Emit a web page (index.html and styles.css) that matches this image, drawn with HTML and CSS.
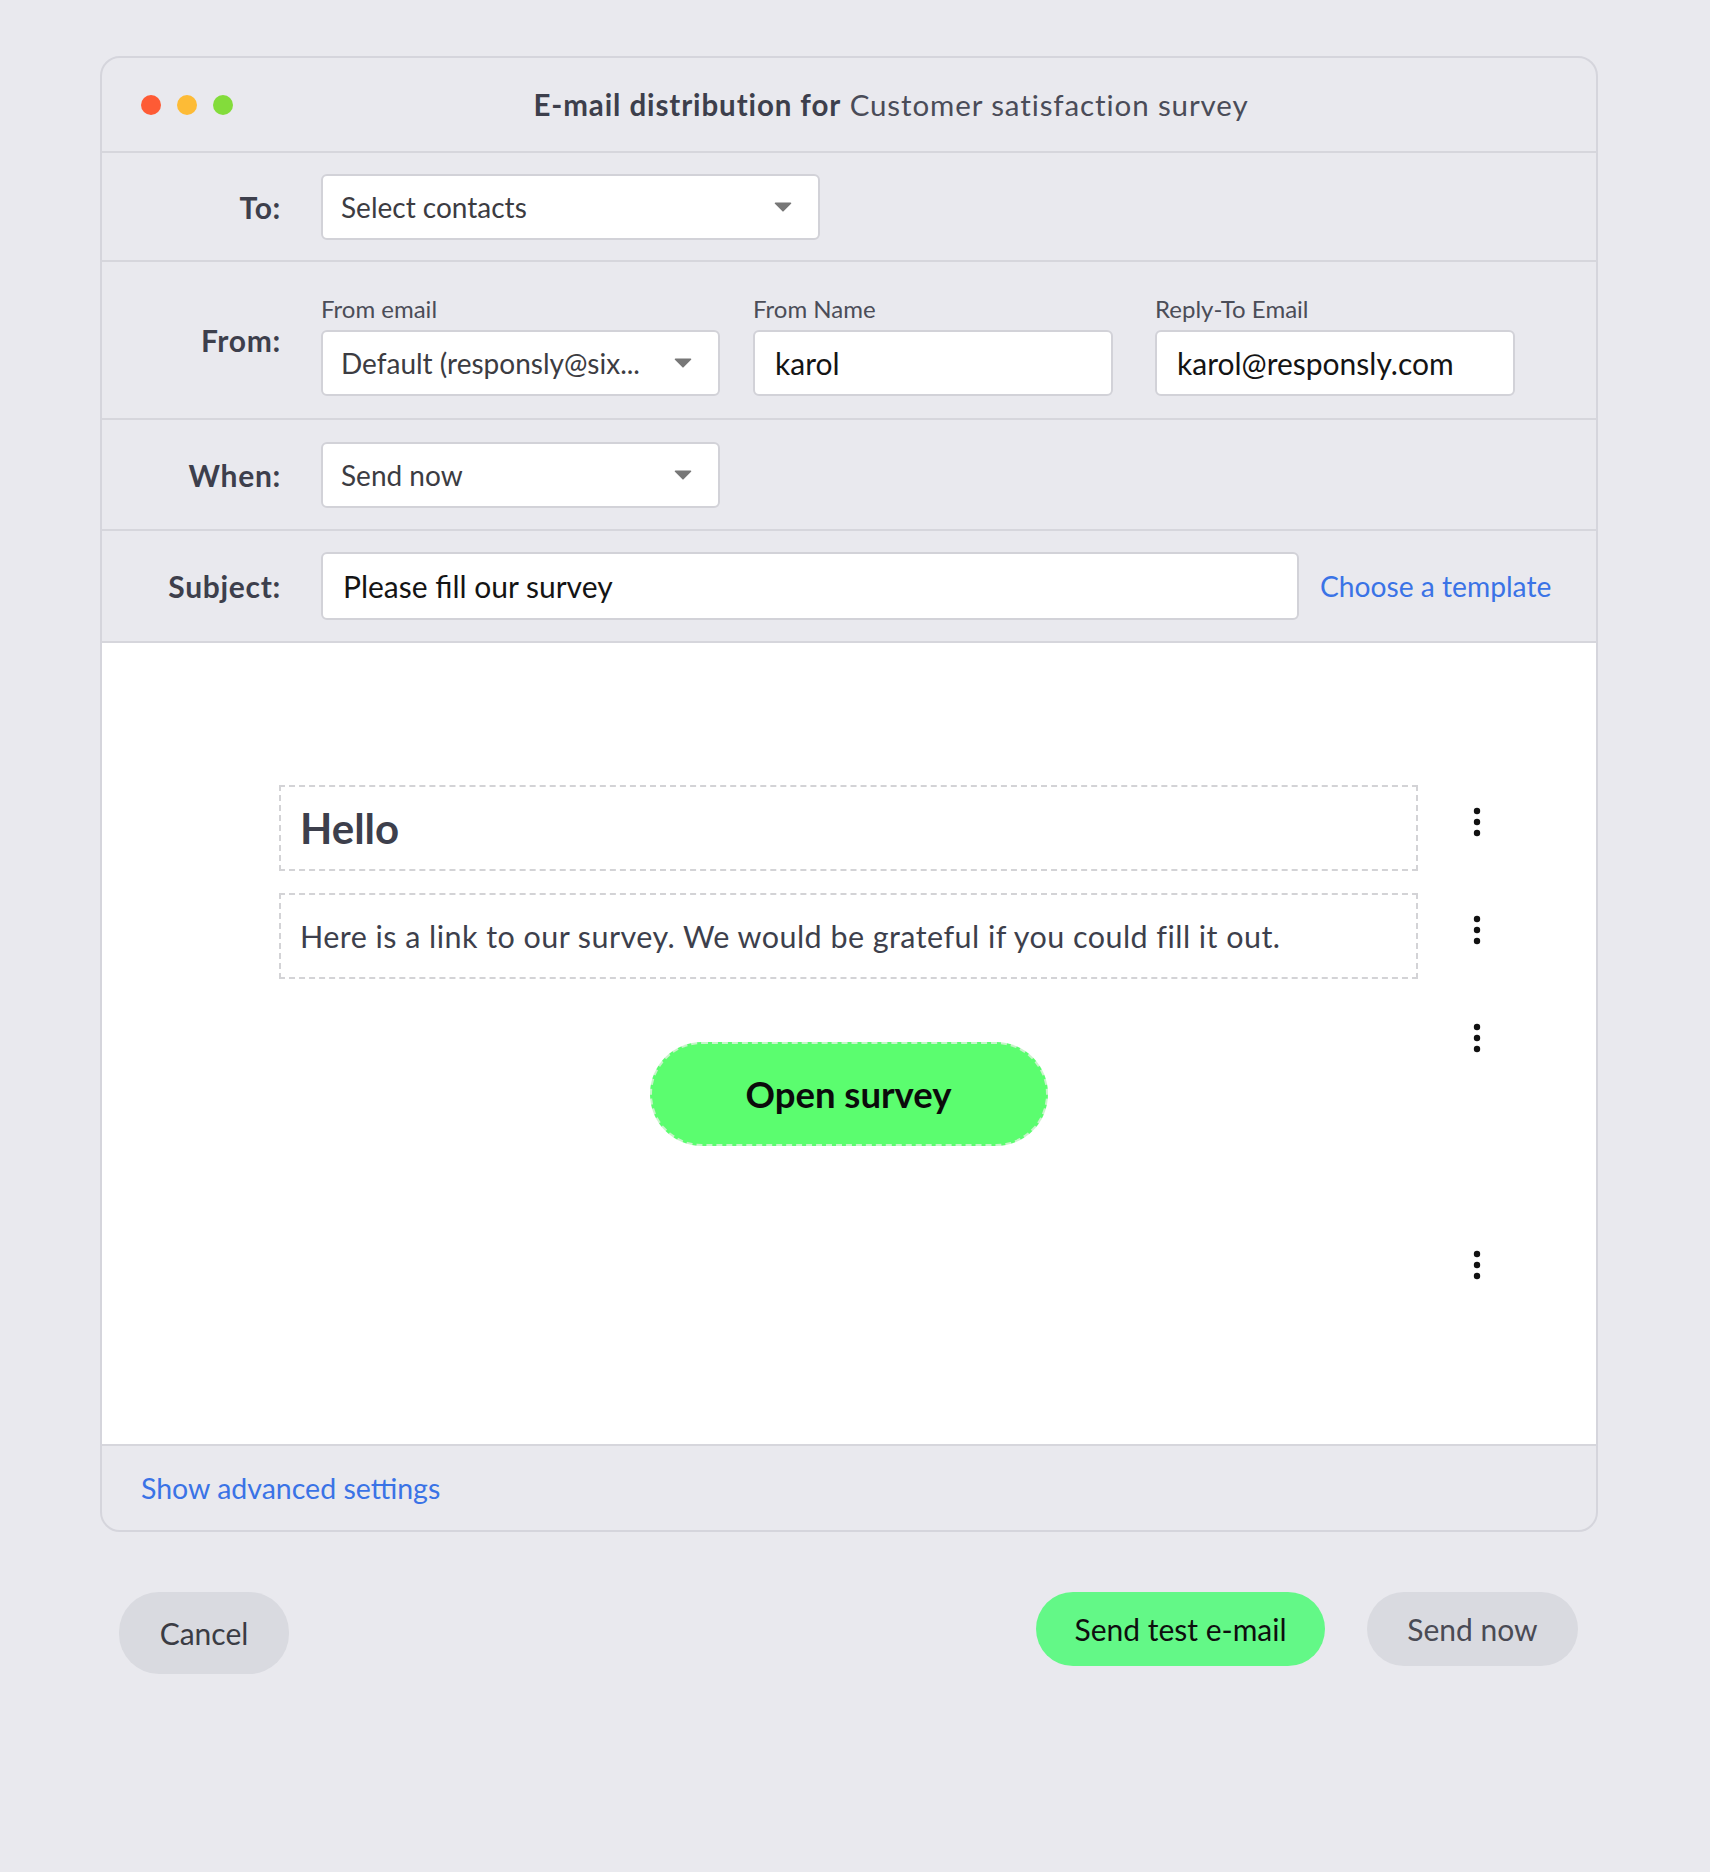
FILE: index.html
```html
<!DOCTYPE html>
<html lang="en">
<head>
<meta charset="utf-8">
<title>E-mail distribution</title>
<link rel="stylesheet" href="styles.css">
</head>
<body>
<div class="page">
  <div class="card">
    <div class="header">
      <div class="lights">
        <span class="light red"></span>
        <span class="light yellow"></span>
        <span class="light green"></span>
      </div>
      <div class="title"><b>E-mail distribution for</b> Customer satisfaction survey</div>
    </div>

    <div class="row row-to">
      <div class="label">To:</div>
      <div class="field select w-to">
        <span class="placeholder">Select contacts</span>
        <svg class="caret" width="18" height="10" viewBox="0 0 18 10"><path d="M1.5 1.2h15l-7.5 7.6z" fill="#777" stroke="#777" stroke-width="1.6" stroke-linejoin="round"/></svg>
      </div>
    </div>

    <div class="row row-from">
      <div class="label">From:</div>
      <div class="from-group">
        <div class="sub">
          <div class="sublabel">From email</div>
          <div class="field select w-from">
            <span class="placeholder">Default (responsly@six...</span>
            <svg class="caret" width="18" height="10" viewBox="0 0 18 10"><path d="M1.5 1.2h15l-7.5 7.6z" fill="#777" stroke="#777" stroke-width="1.6" stroke-linejoin="round"/></svg>
          </div>
        </div>
        <div class="sub sub-name">
          <div class="sublabel">From Name</div>
          <div class="field w-name"><span class="value">karol</span></div>
        </div>
        <div class="sub sub-reply">
          <div class="sublabel">Reply-To Email</div>
          <div class="field w-name"><span class="value">karol@responsly.com</span></div>
        </div>
      </div>
    </div>

    <div class="row row-when">
      <div class="label">When:</div>
      <div class="field select w-from">
        <span class="placeholder">Send now</span>
        <svg class="caret" width="18" height="10" viewBox="0 0 18 10"><path d="M1.5 1.2h15l-7.5 7.6z" fill="#777" stroke="#777" stroke-width="1.6" stroke-linejoin="round"/></svg>
      </div>
    </div>

    <div class="row row-subject">
      <div class="label">Subject:</div>
      <div class="field w-subject"><span class="value">Please fill our survey</span></div>
      <a class="link template-link">Choose a template</a>
    </div>

    <div class="editor">
      <div class="block-row">
        <div class="block box"><span class="hello">Hello</span></div>
        <svg class="kebab" width="12" height="30" viewBox="0 0 12 30"><circle cx="6" cy="4" r="3.2"/><circle cx="6" cy="15" r="3.2"/><circle cx="6" cy="26" r="3.2"/></svg>
      </div>
      <div class="block-row">
        <div class="block box"><span class="para">Here is a link to our survey. We would be grateful if you could fill it out.</span></div>
        <svg class="kebab" width="12" height="30" viewBox="0 0 12 30"><circle cx="6" cy="4" r="3.2"/><circle cx="6" cy="15" r="3.2"/><circle cx="6" cy="26" r="3.2"/></svg>
      </div>
      <div class="block-row">
        <div class="block button-block"><span class="cta">Open survey</span></div>
        <svg class="kebab" width="12" height="30" viewBox="0 0 12 30"><circle cx="6" cy="4" r="3.2"/><circle cx="6" cy="15" r="3.2"/><circle cx="6" cy="26" r="3.2"/></svg>
      </div>
      <div class="block-row">
        <div class="block spacer-block"></div>
        <svg class="kebab" width="12" height="30" viewBox="0 0 12 30"><circle cx="6" cy="4" r="3.2"/><circle cx="6" cy="15" r="3.2"/><circle cx="6" cy="26" r="3.2"/></svg>
      </div>
    </div>

    <div class="footer">
      <a class="link">Show advanced settings</a>
    </div>
  </div>

  <div class="actions">
    <button class="btn btn-cancel">Cancel</button>
    <div class="actions-right">
      <button class="btn btn-test">Send test e-mail</button>
      <button class="btn btn-send">Send now</button>
    </div>
  </div>
</div>
</body>
</html>
```

FILE: styles.css
```css
* { box-sizing: border-box; }

html, body {
  margin: 0;
  padding: 0;
  background: #e9e9ee;
  font-family: "Lato", "Open Sans", sans-serif;
  color: #3d3f4c;
}

.page {
  padding: 56px 0 0 100px;
  width: 1598px;
}

.card {
  width: 1498px;
  border: 2px solid #d5d5dc;
  border-radius: 20px;
  overflow: hidden;
  background: #e9e9ee;
}

/* header */
.header {
  height: 95px;
  display: flex;
  align-items: center;
  border-bottom: 2px solid #d6d6dc;
  padding-left: 39px;
}
.lights {
  display: flex;
  gap: 16px;
}
.light {
  width: 20px;
  height: 20px;
  border-radius: 50%;
  display: block;
}
.red { background: #fe5b35; }
.yellow { background: #fdbb36; }
.green { background: #83dc3b; }

.title {
  flex: 1;
  text-align: center;
  padding-right: 47px;
  font-size: 29.5px;
  letter-spacing: 0.9px;
  color: #4a4c58;
}
.title b { color: #3d3f4c; font-weight: 700; }

/* rows */
.row {
  display: flex;
  align-items: center;
  border-bottom: 2px solid #d6d6dc;
  padding: 21px 0 20px;
}
.row-from { padding: 34px 0 22px; }
.row-when { padding: 22px 0 21px; }
.row-subject { padding: 21px 0; }

.label {
  width: 179px;
  flex: none;
  text-align: right;
  font-weight: 700;
  font-size: 30px;
  letter-spacing: 0.7px;
  color: #3d3f4c;
  margin-right: 40px;
}
.row-from .label { margin-bottom: 12px; }

.field {
  height: 66px;
  background: #fff;
  border: 2px solid #d2d2d8;
  border-radius: 6px;
  display: flex;
  align-items: center;
  padding: 0 20px;
  flex: none;
}
.select { justify-content: space-between; padding: 0 26px 0 18px; }
.w-to { width: 499px; }
.w-from { width: 399px; }
.w-name { width: 360px; }
.w-subject { width: 978px; height: 68px; }

.placeholder {
  font-size: 28px;
  color: #3c3c42;
}
.value {
  font-size: 30px;
  color: #141414;
}

.from-group {
  display: flex;
  align-items: flex-start;
}
.sub { display: flex; flex-direction: column; }
.sub-name { margin-left: 33px; }
.sub-reply { margin-left: 42px; }
.sublabel {
  font-size: 24px;
  color: #4b4d58;
  height: 26px;
  line-height: 26px;
  margin-bottom: 8px;
}

.link {
  color: #3a73e6;
  font-size: 28.5px;
  cursor: pointer;
}
.template-link { margin-left: 21px; font-size: 28.2px; }

/* editor */
.editor {
  background: #fff;
  padding: 142px 0 130px 177px;
  display: flex;
  flex-direction: column;
  gap: 22px;
}
.block-row {
  display: flex;
  align-items: flex-start;
}
.block {
  width: 1139px;
  flex: none;
}
.box {
  height: 86px;
  border: 2px dashed #d3d3d6;
  display: flex;
  align-items: center;
  padding-left: 19px;
}
.hello {
  font-size: 42px;
  font-weight: 700;
  color: #3d3f4c;
}
.para {
  font-size: 30.5px;
  letter-spacing: 0.45px;
  color: #3d3f4c;
}
.button-block {
  padding: 41px 0 60px;
  display: flex;
  justify-content: center;
}
.cta {
  width: 398px;
  height: 104px;
  border-radius: 52px;
  background: #5bfd6f;
  border: 2px dashed #c9f3cb;
  display: flex;
  align-items: center;
  justify-content: center;
  font-size: 36.5px;
  font-weight: 700;
  color: #0b0b0b;
}
.spacer-block { height: 86px; }
.kebab {
  margin-left: 53px;
  margin-top: 22px;
  fill: #111;
  flex: none;
}

/* footer */
.footer {
  height: 86px;
  border-top: 2px solid #d6d6dc;
  display: flex;
  align-items: center;
  padding-left: 39px;
}

/* bottom actions */
.actions {
  width: 1498px;
  display: flex;
  justify-content: space-between;
  align-items: flex-start;
  margin-top: 60px;
  padding: 0 20px 0 19px;
}
.actions-right {
  display: flex;
  gap: 42px;
}
.btn {
  font-family: inherit;
  border: none;
  border-radius: 40px;
  font-size: 30px;
  height: 74px;
  padding: 0;
  cursor: pointer;
}
.btn-cancel {
  width: 170px;
  height: 82px;
  background: #d9dae0;
  color: #3b3c44;
}
.btn-test {
  width: 289px;
  background: #63f887;
  color: #0e0e0e;
}
.btn-send {
  width: 211px;
  background: #d9dae0;
  color: #4a4b55;
}
```
